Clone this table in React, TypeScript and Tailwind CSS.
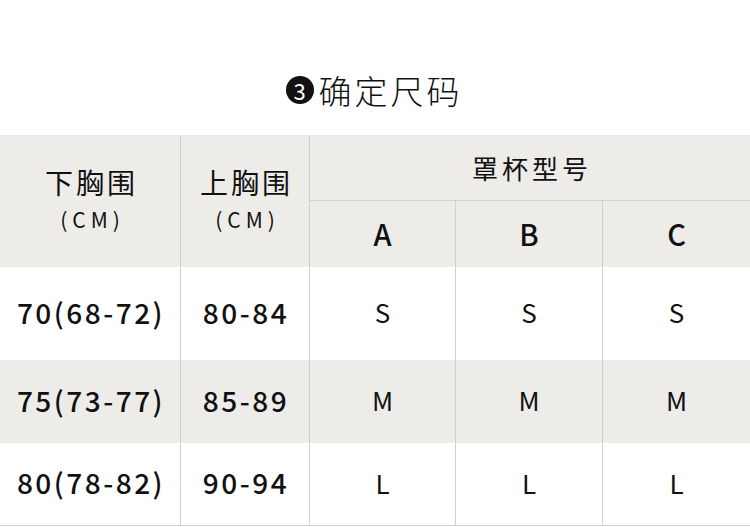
import React from "react";

const cjk = { fontFamily: '"Noto Sans CJK SC", "Noto Sans", sans-serif' };

const rows = [
  { a: "70(68-72)", b: "80-84", s: "S", h: "h-[93px]", bg: "bg-white" },
  { a: "75(73-77)", b: "85-89", s: "M", h: "h-[83px]", bg: "bg-[#eeece9]" },
  { a: "80(78-82)", b: "90-94", s: "L", h: "h-[83px]", bg: "bg-white" },
];

export default function App() {
  return (
    <div className="w-[750px] h-[527px] bg-white overflow-hidden text-[#111]" style={cjk}>
      <div className="h-[135px] flex items-start justify-center pt-[70px]">
        <div className="flex items-center gap-[5px] pr-[2px]">
          <div className="w-[28px] h-[28px] rounded-full bg-[#111] text-white flex items-center justify-center text-[22px] leading-none">
            3
          </div>
          <div className="text-[33px] leading-[40px] tracking-[3px] font-light">确定尺码</div>
        </div>
      </div>
      <div className="grid grid-cols-[180px_129px_146px_147px_148px] grid-rows-[66px_66px] bg-[#eeece9]">
        <div className="row-span-2 flex flex-col items-center justify-center pb-[5px]">
          <div className="text-[28px] leading-[36px] tracking-[3px] pl-[3px]">下胸围</div>
          <div className="text-[21px] leading-[28px] tracking-[5px] pl-[5px] mt-[5px]">(CM)</div>
        </div>
        <div className="row-span-2 border-l border-[#cfcfcf] flex flex-col items-center justify-center pb-[5px]">
          <div className="text-[28px] leading-[36px] tracking-[3px] pl-[3px]">上胸围</div>
          <div className="text-[21px] leading-[28px] tracking-[5px] pl-[5px] mt-[5px]">(CM)</div>
        </div>
        <div className="col-span-3 border-l border-b border-[#cfcfcf] flex items-center justify-center">
          <div className="text-[26px] leading-[34px] tracking-[4px] pl-[4px]">罩杯型号</div>
        </div>
        {["A", "B", "C"].map((c) => (
          <div key={c} className="border-l border-[#cfcfcf] flex items-center justify-center text-[29px] font-medium leading-none pb-[2px]">
            {c}
          </div>
        ))}
      </div>
      {rows.map((r, i) => (
        <div
          key={i}
          className={`grid grid-cols-[180px_129px_146px_147px_148px] ${r.h} ${r.bg} ${i === 2 ? "border-b border-[#cfcfcf]" : ""}`}
        >
          <div className="flex items-center justify-center text-[28px] font-medium tracking-[2.5px] pl-[2px] pb-[4px]">{r.a}</div>
          <div className="border-l border-[#cfcfcf] flex items-center justify-center text-[28px] font-medium tracking-[2.5px] pl-[2px] pb-[4px]">{r.b}</div>
          {[0, 1, 2].map((k) => (
            <div key={k} className="border-l border-[#cfcfcf] flex items-center justify-center text-[26px] pb-[4px]">
              {r.s}
            </div>
          ))}
        </div>
      ))}
    </div>
  );
}
